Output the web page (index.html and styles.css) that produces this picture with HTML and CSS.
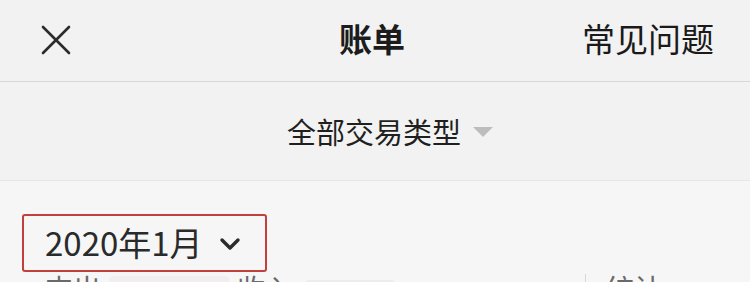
FILE: index.html
```html
<!DOCTYPE html>
<html lang="zh">
<head>
<meta charset="utf-8">
<link rel="stylesheet" href="styles.css">
</head>
<body>
<div class="page">
  <header class="topbar">
    <span class="close">
      <svg width="30" height="30" viewBox="0 0 30 30"><path d="M2 2 L28 28 M28 2 L2 28" stroke="#2b2b2b" stroke-width="2.6" fill="none" stroke-linecap="round"/></svg>
    </span>
    <h1 class="title">账单</h1>
    <span class="faq">常见问题</span>
  </header>
  <section class="filter">
    <span class="filter-label">全部交易类型</span>
    <span class="tri"></span>
  </section>
  <section class="content">
    <div class="month">
      <span class="month-text">2020年1月</span>
      <svg class="chev" width="22" height="14" viewBox="0 0 22 14"><path d="M3 3 L11 11 L19 3" stroke="#2b2b2b" stroke-width="3.4" fill="none" stroke-linecap="round" stroke-linejoin="round"/></svg>
    </div>
    <div class="summary">
      <span class="sum-item">支出</span>
      <span class="blur b1"></span>
      <span class="sum-item">收入</span>
      <span class="blur b2"></span>
      <span class="divider"></span>
      <span class="sum-item stat">统计 ›</span>
    </div>
  </section>
</div>
</body>
</html>
```
FILE: styles.css
```css
* { box-sizing: border-box; margin: 0; padding: 0; }
html, body { width: 750px; height: 282px; overflow: hidden; }
body {
  background: #f6f6f6;
  font-family: "Noto Sans CJK SC", "Noto Sans", sans-serif;
  color: #1c1c1c;
}
.topbar {
  height: 82px;
  background: #f2f2f2;
  border-bottom: 1px solid #d8d8d8;
  display: flex;
  align-items: center;
  justify-content: space-between;
  padding: 0 36px 0 41px;
  position: relative;
}
.close { display: flex; width: 30px; height: 30px; margin-top: -2px; }
.title {
  position: absolute;
  left: 0; right: 6px;
  text-align: center;
  font-size: 33px;
  font-weight: 700;
  line-height: 1;
  margin-top: -4px;
  pointer-events: none;
}
.faq { font-size: 33px; line-height: 1; margin-top: -4px; color: #1a1a1a; }
.filter {
  height: 99px;
  background: #f2f2f2;
  border-bottom: 1px solid #e6e6e6;
  display: flex;
  align-items: center;
  justify-content: center;
  gap: 12px;
  padding-left: 30px;
}
.filter-label { font-size: 29px; line-height: 1; color: #1f1f1f; }
.tri {
  width: 0; height: 0;
  border-left: 10px solid transparent;
  border-right: 10px solid transparent;
  border-top: 10px solid #bdbdbd;
  margin-top: 2px;
}
.content { padding: 33px 0 0 22px; }
.month {
  width: 245px;
  height: 58px;
  border: 2px solid #c2403c;
  border-radius: 3px;
  display: flex;
  align-items: center;
  padding-left: 21px;
  gap: 16px;
}
.month-text { font-size: 33px; line-height: 1; color: #2a2a2a; margin-top: -2px; }
.chev { margin-top: 2px; }
.summary {
  display: flex;
  align-items: flex-start;
  height: 40px;
  padding-left: 23px;
  margin-top: -6px;
}
.sum-item { font-size: 28px; line-height: 1; color: #6a6a6a; padding-top: 8px; }
.blur { display: block; height: 30px; background: #ececec; border-radius: 4px; }
.b1 { width: 120px; margin: 10px 8px 0 8px; background: #f0eeee; }
.b2 { width: 90px; margin: 14px 0 0 12px; }
.divider { width: 1px; height: 30px; background: #d6d6d6; margin: 8px 0 0 190px; }
.stat { margin-left: 20px; }
```
